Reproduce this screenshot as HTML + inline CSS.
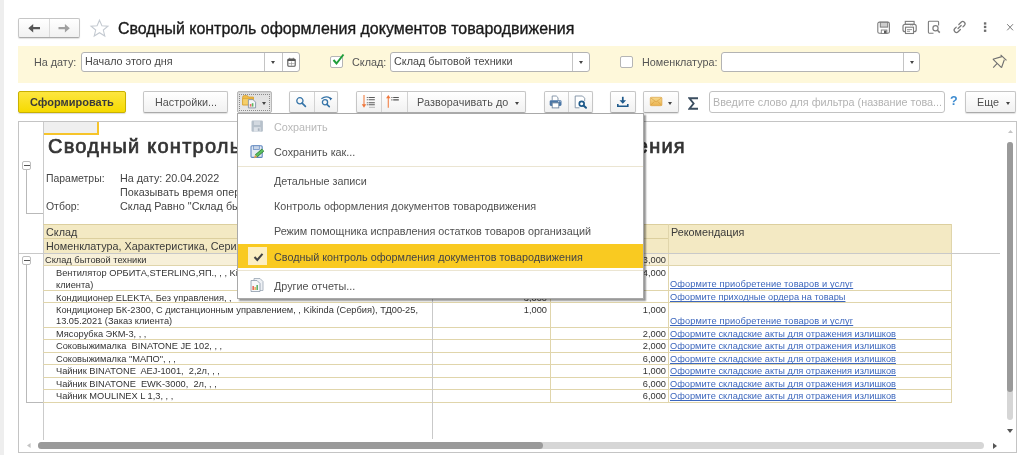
<!DOCTYPE html>
<html><head><meta charset="utf-8">
<style>
*{box-sizing:border-box;margin:0;padding:0}
html,body{width:1024px;height:455px;overflow:hidden;background:#fff;-webkit-font-smoothing:antialiased;font-family:"Liberation Sans",sans-serif;color:#333}
.a{position:absolute}
.t{position:absolute;white-space:pre;will-change:transform}
.btn{position:absolute;border:1px solid #c6c6c6;border-bottom-color:#aaa;border-radius:2px;background:linear-gradient(#fff,#f1f1f1);box-shadow:0 1px 1px rgba(0,0,0,.12)}
.dv{position:absolute;top:0;bottom:0;width:1px;background:#d2d2d2}
.fld{position:absolute;background:#fff;border:1px solid #b3b3b3;border-radius:3px}
.dd{position:absolute;width:0;height:0;border-left:2.5px solid transparent;border-right:2.5px solid transparent;border-top:3px solid #444}
.ui{font-size:10.8px;line-height:12px}
.tb{font-size:9.25px;line-height:11px;color:#333}
.lnk{color:#3d67bd;text-decoration:underline;text-decoration-skip-ink:none;text-decoration-thickness:1px}
.hl{position:absolute;height:1px;background:#e0d5ab}
.vl{position:absolute;width:1px;background:#e0d5ab}
</style></head><body>
<!-- left strip -->
<div class="a" style="left:0;top:0;width:4px;height:455px;background:#eeeeee"></div>

<!-- nav buttons -->
<div class="btn" style="left:18px;top:18px;width:62px;height:20px">
  <div class="dv" style="left:30px;background:#dadada"></div>
  <svg class="a" style="left:7px;top:4px" width="16" height="10" viewBox="0 0 16 10"><path d="M2.3 5.2 L7.2 1 L7.2 4.1 L14 4.1 L14 6.3 L7.2 6.3 L7.2 9.4 Z" fill="#555"/></svg>
  <svg class="a" style="left:37px;top:4px" width="16" height="10" viewBox="0 0 16 10"><path d="M13.8 5.2 L8.9 1 L8.9 4.1 L2.5 4.1 L2.5 6.3 L8.9 6.3 L8.9 9.4 Z" fill="#a0a0a0"/></svg>
</div>
<!-- star -->
<svg class="a" style="left:89px;top:18px" width="21" height="20" viewBox="0 0 21 20"><path d="M10.5 1.2 L13.1 7.2 L19.6 7.6 L14.6 11.8 L16.2 18.2 L10.5 14.7 L4.8 18.2 L6.4 11.8 L1.4 7.6 L7.9 7.2 Z" transform="translate(10.5 10) scale(.93) translate(-10.5 -9.6)" fill="none" stroke="#c4cad1" stroke-width="1.15"/></svg>
<div class="t" style="left:118px;top:20px;font-size:15.96px;line-height:18px;color:#1a1a1a;-webkit-text-stroke:.35px #1a1a1a">Сводный контроль оформления документов товародвижения</div>

<!-- top right icons -->
<svg class="a" style="left:872px;top:16px" width="72" height="24" viewBox="0 0 72 24">
 <g fill="none" stroke="#7d7d7d">
  <rect x="5.8" y="6.1" width="11.6" height="11.2" rx="1.6" stroke-width="1.1"/>
  <rect x="8.3" y="6.3" width="7.4" height="4.8" fill="#cdcdcd" stroke-width="1"/>
  <rect x="9.3" y="14" width="5.6" height="3.5" fill="#fff" stroke-width=".9"/>
  <rect x="12" y="14.6" width="2.4" height="2.6" fill="#5a5a5a" stroke="none"/>
  <rect x="33.3" y="5.4" width="8.8" height="3" stroke-width="1.1"/>
  <rect x="31" y="8.3" width="13.2" height="7.4" rx="2" stroke-width="1.2"/>
  <rect x="33.5" y="11.2" width="8" height="6.3" fill="#fff" stroke-width="1.1"/>
  <path d="M35 13.6h5M35 15.3h3" stroke-width=".8"/>
  <path d="M38.5 9.6h.8M40.3 9.6h.8" stroke-width=".7"/>
  <path d="M61.5 17.2H57.3a.9.9 0 0 1-.9-.9V6.2a.9.9 0 0 1 .9-.9h8.4a.9.9 0 0 1 .9.9V9.6" stroke-width="1.1"/>
  <circle cx="63.5" cy="12.3" r="2.6" stroke-width="1.2"/>
  <path d="M65.4 14.3l2.4 2.3" stroke-width="1.5"/>
 </g>
</svg>
<svg class="a" style="left:948px;top:16px" width="72" height="24" viewBox="0 0 72 24">
 <g transform="translate(11.6 11) rotate(-45)" fill="none" stroke="#7a7a7a" stroke-width="1.25" stroke-linecap="round">
  <path d="M1.2 -2.3H4.4A2.3 2.3 0 0 1 4.4 2.3H2.4"/>
  <path d="M-1.2 2.3H-4.4A2.3 2.3 0 0 1 -4.4 -2.3H-2.4"/>
  <path d="M-2.2 0H2.2"/>
 </g>
 <rect x="35.9" y="6.3" width="2.4" height="2.3" fill="#6e6e6e"/>
 <rect x="35.9" y="9.8" width="2.4" height="2.3" fill="#6e6e6e"/>
 <rect x="35.9" y="13.6" width="2.4" height="2.3" fill="#6e6e6e"/>
 <path d="M59.2 8.2L65 14.3M65 8.2L59.2 14.3" stroke="#7a7a7a" stroke-width="1"/>
</svg>

<!-- filter bar -->
<div class="a" style="left:18px;top:46px;width:998px;height:37px;background:#fef8da"></div>
<div class="t ui" style="left:34px;top:56px;color:#555">На дату:</div>
<div class="fld" style="left:81px;top:52px;width:219px;height:20px">
  <div class="t ui" style="left:3px;top:2.4px;color:#474747">Начало этого дня</div>
  <div class="dv" style="left:182px;background:#c4c4c4"></div>
  <div class="dd" style="left:189px;top:7.5px"></div>
  <div class="dv" style="left:200px;background:#c4c4c4"></div>
  <svg class="a" style="left:204.5px;top:3.5px" width="9" height="10" viewBox="0 0 9 10"><rect x=".8" y="2" width="7.4" height="7.3" rx="1" fill="#fff" stroke="#555" stroke-width="1.1"/><rect x=".8" y="2" width="7.4" height="2" fill="#555"/><path d="M2.7 .8v1.6M6.3 .8v1.6" stroke="#666" stroke-width=".9"/><path d="M4.5 4.5v4.3M1.3 6.6h6.4" stroke="#999" stroke-width=".7"/></svg>
</div>
<div class="a" style="left:330px;top:56px;width:13px;height:12px;border:1px solid #b5b5b5;border-radius:2px;background:#fff"></div>
<svg class="a" style="left:331px;top:53px" width="14" height="13" viewBox="0 0 14 13"><path d="M2.5 7 L5.5 10.5 L12.5 1.5" fill="none" stroke="#1f9e3a" stroke-width="2"/></svg>
<div class="t ui" style="left:352px;top:56px;color:#555">Склад:</div>
<div class="fld" style="left:390px;top:52px;width:200px;height:20px">
  <div class="t ui" style="left:3px;top:2.4px;color:#474747">Склад бытовой техники</div>
  <div class="dv" style="left:181px;background:#c4c4c4"></div>
  <div class="dd" style="left:188px;top:7.5px"></div>
</div>
<div class="a" style="left:620px;top:56px;width:13px;height:12px;border:1px solid #b5b5b5;border-radius:2px;background:#fff"></div>
<div class="t ui" style="left:642px;top:56px;color:#555">Номенклатура:</div>
<div class="fld" style="left:721px;top:52px;width:199px;height:20px">
  <div class="dv" style="left:181px;background:#c4c4c4"></div>
  <div class="dd" style="left:188px;top:7.5px"></div>
</div>
<svg class="a" style="left:984px;top:48px" width="32" height="28" viewBox="0 0 32 28"><path d="M8.9 11.1L17.5 19.7M8.9 11.3L17.8 8.6M17.5 19.7L20.3 11.7M16.6 6.8L22.5 12.3M13.2 15.4L9.2 19.7" fill="none" stroke="#6f6f6f" stroke-width="1.1"/></svg>

<!-- toolbar -->
<div class="a" style="left:18px;top:91px;width:108px;height:22px;border:1px solid #c9b100;border-radius:2px;background:linear-gradient(#fde640,#f6da00);box-shadow:0 1px 1px rgba(0,0,0,.15)"></div>
<div class="t" style="left:30px;top:95.5px;font-size:11px;line-height:12px;font-weight:bold;color:#3a3a3a">Сформировать</div>
<div class="btn" style="left:143px;top:91px;width:85px;height:22px"><div class="t ui" style="left:11px;top:4px;color:#505050">Настройки...</div></div>
<div class="a" style="left:237px;top:91px;width:35px;height:22px;border:1px solid #b8b8b8;border-radius:2px;background:linear-gradient(#e0e0e0,#e8e8e8);box-shadow:inset 0 1px 1px rgba(0,0,0,.08)">
  <div class="a" style="left:1px;top:1.5px;width:31px;height:17px;border:1px dotted #8a8a8a"></div>
  <svg class="a" style="left:4px;top:3px" width="17" height="15" viewBox="0 0 17 15"><path d="M.6 2.2Q.6 .5 2.5 .5H4.5Q6 .5 6.5 2H11.5V9.9H.6Z" fill="#eebb4c" stroke="#d59c26" stroke-width=".7"/><path d="M.6 3.6H11.5V9.9H.6Z" fill="#f5cf6a" stroke="#d59c26" stroke-width=".6"/><path d="M6.4 4.6h4.6l2.6 2.6v5.7H6.4z" fill="#f4f6f8" stroke="#8391a3" stroke-width=".9"/><rect x="7.8" y="9" width="1.6" height="2.6" fill="#ec6a6a"/><rect x="9.8" y="8.2" width="1.6" height="3.4" fill="#5cb85c"/></svg>
  <div class="dd" style="left:23.5px;top:9.6px"></div>
</div>
<div class="btn" style="left:289px;top:91px;width:49px;height:22px">
  <div class="dv" style="left:24px"></div>
  <svg class="a" style="left:6px;top:5px" width="11" height="11" viewBox="0 0 11 11"><circle cx="3.9" cy="3.8" r="3.1" fill="none" stroke="#3574a8" stroke-width="1.3"/><path d="M6.1 6.2L9.4 9.4" stroke="#3574a8" stroke-width="1.7" stroke-linecap="round"/></svg>
  <svg class="a" style="left:31px;top:4px" width="12" height="12" viewBox="0 0 12 12"><circle cx="4" cy="6.3" r="2.6" fill="none" stroke="#3574a8" stroke-width="1.3"/><path d="M5.9 8.3L8.3 10.6" stroke="#3574a8" stroke-width="1.6" stroke-linecap="round"/><path d="M0.4 2.8 Q5 -0.6 9.2 2.2" fill="none" stroke="#3574a8" stroke-width="1.3"/><path d="M8.3 1 L11.3 2.4 L9.2 4.6Z" fill="#2d68a0"/></svg>
</div>
<div class="btn" style="left:356px;top:91px;width:170px;height:22px">
  <div class="dv" style="left:24px"></div>
  <div class="dv" style="left:50px"></div>
  <svg class="a" style="left:4px;top:2px" width="16" height="16" viewBox="0 0 16 16"><path d="M3 1v10" stroke="#f28a55" stroke-width="1.2"/><path d="M0.8 10.3L5.2 10.3 3 13.7Z" fill="#f0763a"/><path d="M5.8 3.5h1M7.6 3.5h6.2M5.8 5.7h1M7.6 5.7h6.2M5.8 8.7h1M7.6 8.7h6.2M5.8 10.7h1M7.6 10.7h6.2" stroke="#5a5a5a" stroke-width="1.1"/><path d="M8 13.3h6" stroke="#aaa" stroke-width=".8"/></svg>
  <svg class="a" style="left:28px;top:2px" width="16" height="16" viewBox="0 0 16 16"><path d="M3.3 3v10.7" stroke="#f28a55" stroke-width="1.2"/><path d="M1.1 4.2L5.5 4.2 3.3 1Z" fill="#f0763a"/><path d="M6.4 3.5h1M8.2 3.5h5.6M6.4 5.8h1M8.2 5.8h5.6" stroke="#555" stroke-width="1.2"/></svg>
  <div class="t ui" style="left:60px;top:4px;color:#505050;letter-spacing:.09px">Разворачивать до</div>
  <div class="dd" style="left:158px;top:10px"></div>
</div>
<div class="btn" style="left:544px;top:91px;width:49px;height:22px">
  <div class="dv" style="left:23px"></div>
  <svg class="a" style="left:0;top:0" width="47" height="20" viewBox="0 0 47 20"><path d="M7.2 8.4V4H11.3L13 5.7V8.4" fill="#fff" stroke="#7e8fa3" stroke-width=".9"/><rect x="4.7" y="8.3" width="11.8" height="5.6" rx="1.3" fill="#4a76a6"/><path d="M13 9.6h1M14.6 9.6h1" stroke="#e8eef5" stroke-width=".8"/><rect x="7.2" y="10.9" width="6.6" height="5" fill="#fff" stroke="#6f86a0" stroke-width=".9"/>
  <path d="M34.5 15.8H30.2V4H37.5L39.7 6.2V9" fill="#fff" stroke="#7d8ea3" stroke-width=".9"/><circle cx="36.7" cy="11.7" r="2.4" fill="#fff" stroke="#1e5a8a" stroke-width="1.7"/><path d="M38.5 13.5L41 15.8" stroke="#1e5a8a" stroke-width="2" stroke-linecap="round"/></svg>
</div>
<div class="btn" style="left:610px;top:91px;width:26px;height:22px">
  <svg class="a" style="left:0;top:0" width="24" height="20" viewBox="0 0 24 20"><path d="M11.8 4.8v5.5" stroke="#1f5a8c" stroke-width="1.7"/><path d="M8.5 8.2L11.8 11.8 15.1 8.2Z" fill="#1f5a8c"/><path d="M6.8 12v2.2h10v-2.2" fill="none" stroke="#1f5a8c" stroke-width="1.6"/></svg>
</div>
<div class="btn" style="left:643px;top:91px;width:35.5px;height:22px">
  <svg class="a" style="left:0;top:0" width="33" height="20" viewBox="0 0 33 20"><defs><linearGradient id="eg" x1="0" y1="0" x2="0" y2="1"><stop offset="0" stop-color="#f7d98e"/><stop offset="1" stop-color="#e9b24e"/></linearGradient></defs><rect x="6.3" y="5.3" width="11.6" height="8.4" rx="1" fill="url(#eg)" stroke="#dca446" stroke-width=".7"/><path d="M6.6 5.8L12.1 9.9L17.6 5.8M6.6 13.3L10.5 9.4M17.6 13.3L13.7 9.4" fill="none" stroke="#d59a3a" stroke-width=".6"/></svg>
  <div class="dd" style="left:23.5px;top:10.3px"></div>
</div>
<svg class="a" style="left:688px;top:96.5px" width="11" height="13" viewBox="0 0 11 13"><path d="M10 1.3H1.4L5.6 6.5L1.4 11.7H10" fill="none" stroke="#3b4e60" stroke-width="1.9" stroke-linejoin="miter"/></svg>
<div class="fld" style="left:709px;top:91px;width:236px;height:22px;border-color:#c2c2c2">
  <div class="t ui" style="left:3px;top:4px;color:#b3b3b3">Введите слово для фильтра (название това...</div>
</div>
<div class="t" style="left:949.5px;top:94px;font-size:12.5px;line-height:14px;font-weight:bold;color:#3d8bd0">?</div>
<div class="btn" style="left:965px;top:91px;width:51px;height:22px">
  <div class="t ui" style="left:11px;top:4px;color:#505050">Еще</div>
  <div class="dd" style="left:40px;top:9.7px"></div>
</div>

<!-- report area -->
<div class="a" style="left:18px;top:121px;width:999px;height:332px;border:1px solid #c4c4c4;background:#fff;overflow:hidden">
</div>

<!-- report content -->
<div class="a" style="left:19px;top:122px;width:997px;height:329px;overflow:hidden">
<div class="a" style="left:0;top:0;width:1000px;height:400px;transform:translate(-19px,-122px)">
  <!-- gutter line -->
  <div class="a" style="left:43px;top:122px;width:1px;height:318px;background:#cbcbcb"></div>
  <!-- selected cell -->
  <div class="a" style="left:44px;top:122px;width:55px;height:13px;background:#efefef;border-right:2px solid #f6c42a;border-bottom:2px solid #f6c42a"></div>
  <div class="t" style="left:48px;top:134px;font-size:20px;line-height:24px;color:#333;letter-spacing:1.24px;-webkit-text-stroke:.7px #333">Сводный контроль оформления документов товародвижения</div>
  <!-- tree 1 -->
  <div class="a" style="left:21.5px;top:161px;width:9.5px;height:9px;border:1px solid #bdbdbd;border-radius:2px;background:#fff"></div>
  <div class="a" style="left:23.5px;top:165px;width:6px;height:1px;background:#555"></div>
  <div class="a" style="left:26px;top:170px;width:1px;height:43px;background:#b9b9b9"></div>
  <div class="a" style="left:26px;top:213px;width:17px;height:1px;background:#b9b9b9"></div>
  <div class="t ui" style="left:46px;top:172.5px;color:#444;font-size:10.45px">Параметры:</div>
  <div class="t ui" style="left:119.6px;top:172.4px;color:#444">На дату: 20.04.2022</div>
  <div class="t ui" style="left:119.6px;top:185.8px;color:#444">Показывать время операций: Нет</div>
  <div class="t ui" style="left:46px;top:200.5px;color:#444;font-size:10.45px">Отбор:</div>
  <div class="t ui" style="left:119.6px;top:200.4px;color:#444">Склад Равно "Склад бытовой техники"</div>
  <!-- header -->
  <div class="a" style="left:44px;top:224px;width:907px;height:29px;background:#f3e9c3"></div>
  <div class="hl" style="left:43px;top:224px;width:908px;background:#dccf9e"></div>
  <div class="hl" style="left:43px;top:238px;width:625px;background:#dccf9e"></div>
  <div class="t ui" style="left:46px;top:225.6px;color:#3a3a3a">Склад</div>
  <div class="t ui" style="left:46px;top:240px;color:#3a3a3a">Номенклатура, Характеристика, Серия</div>
  <div class="t ui" style="left:671px;top:225.5px;color:#3a3a3a">Рекомендация</div>
  <!-- group row -->
  <div class="a" style="left:44px;top:254px;width:907px;height:11px;background:#f7f0d9"></div>
  <div class="t tb" style="left:45px;top:254.6px">Склад бытовой техники</div>
  <div class="t tb" style="left:432px;top:254.6px;width:115px;text-align:right">3,000</div>
  <div class="t tb" style="left:550px;top:254.6px;width:116px;text-align:right">3,000</div>
  <!-- rows -->
  <div class="t tb" style="left:55.8px;top:267.6px">Вентилятор ОРБИТА,STERLING,ЯП., , , Kikinda (Сербия), ТД00-25, 13.05.2021 (Заказ</div>
  <div class="t tb" style="left:55.8px;top:279.6px">клиента)</div>
  <div class="t tb" style="left:432px;top:267.6px;width:115px;text-align:right">4,000</div>
  <div class="t tb" style="left:550px;top:267.6px;width:116px;text-align:right">4,000</div>
  <div class="t tb lnk" style="left:670px;top:279.4px;letter-spacing:.12px">Оформите приобретение товаров и услуг</div>
  <div class="t tb" style="left:55.8px;top:292.6px">Кондиционер ELEKTA, Без управления, ,</div>
  <div class="t tb" style="left:432px;top:292.6px;width:115px;text-align:right">3,000</div>
  <div class="t tb lnk" style="left:670px;top:291.9px">Оформите приходные ордера на товары</div>
  <div class="t tb" style="left:55.8px;top:305.1px">Кондиционер БК-2300, С дистанционным управлением, , Kikinda (Сербия), ТД00-25,</div>
  <div class="t tb" style="left:55.8px;top:316.1px">13.05.2021 (Заказ клиента)</div>
  <div class="t tb" style="left:432px;top:305.1px;width:115px;text-align:right">1,000</div>
  <div class="t tb" style="left:550px;top:305.1px;width:116px;text-align:right">1,000</div>
  <div class="t tb lnk" style="left:670px;top:315.9px;letter-spacing:.12px">Оформите приобретение товаров и услуг</div>
    <div class="t tb" style="left:55.8px;top:328.6px">Мясорубка ЭКМ-3, , ,</div>
  <div class="t tb" style="left:550px;top:328.6px;width:116px;text-align:right">2,000</div>
  <div class="t tb lnk" style="left:670px;top:328.9px">Оформите складские акты для отражения излишков</div>
  <div class="t tb" style="left:55.8px;top:341.1px">Соковыжималка  BINATONE JE 102, , ,</div>
  <div class="t tb" style="left:550px;top:341.1px;width:116px;text-align:right">2,000</div>
  <div class="t tb lnk" style="left:670px;top:341.4px">Оформите складские акты для отражения излишков</div>
  <div class="t tb" style="left:55.8px;top:353.6px">Соковыжималка "МАПО", , ,</div>
  <div class="t tb" style="left:550px;top:353.6px;width:116px;text-align:right">6,000</div>
  <div class="t tb lnk" style="left:670px;top:353.9px">Оформите складские акты для отражения излишков</div>
  <div class="t tb" style="left:55.8px;top:366.1px">Чайник BINATONE  AEJ-1001,  2,2л, , ,</div>
  <div class="t tb" style="left:550px;top:366.1px;width:116px;text-align:right">1,000</div>
  <div class="t tb lnk" style="left:670px;top:366.4px">Оформите складские акты для отражения излишков</div>
  <div class="t tb" style="left:55.8px;top:378.6px">Чайник BINATONE  EWK-3000,  2л, , ,</div>
  <div class="t tb" style="left:550px;top:378.6px;width:116px;text-align:right">6,000</div>
  <div class="t tb lnk" style="left:670px;top:378.9px">Оформите складские акты для отражения излишков</div>
  <div class="t tb" style="left:55.8px;top:391.1px">Чайник MOULINEX L 1,3, , ,</div>
  <div class="t tb" style="left:550px;top:391.1px;width:116px;text-align:right">6,000</div>
  <div class="t tb lnk" style="left:670px;top:391.4px">Оформите складские акты для отражения излишков</div>

  <!-- lines -->
    <div class="hl" style="left:43px;top:265px;width:908px"></div>
  <div class="hl" style="left:43px;top:290px;width:908px"></div>
  <div class="hl" style="left:43px;top:302px;width:908px"></div>
  <div class="hl" style="left:43px;top:327px;width:908px"></div>
  <div class="hl" style="left:43px;top:339px;width:908px"></div>
  <div class="hl" style="left:43px;top:352px;width:908px"></div>
  <div class="hl" style="left:43px;top:364px;width:908px"></div>
  <div class="hl" style="left:43px;top:377px;width:908px"></div>
  <div class="hl" style="left:43px;top:389px;width:908px"></div>
  <div class="hl" style="left:43px;top:402px;width:908px"></div>
  <div class="vl" style="left:432px;top:224px;height:179px"></div>
  <div class="vl" style="left:550px;top:224px;height:179px"></div>
  <div class="vl" style="left:668px;top:224px;height:179px"></div>
  <div class="vl" style="left:951px;top:224px;height:179px"></div>

  <div class="a" style="left:18px;top:253px;width:982px;height:1px;background:#c9c9c9"></div>
  <div class="a" style="left:432px;top:253px;width:1px;height:186px;background:#c9c9c9"></div>
  <!-- tree 2 -->
  <div class="a" style="left:21.5px;top:256px;width:9.5px;height:9px;border:1px solid #bdbdbd;border-radius:2px;background:#fff"></div>
  <div class="a" style="left:23.5px;top:260px;width:6px;height:1px;background:#555"></div>
  <div class="a" style="left:26px;top:265px;width:1px;height:137px;background:#b9b9b9"></div>
  <div class="a" style="left:26px;top:402px;width:17px;height:1px;background:#b9b9b9"></div>
</div>
</div>
<!-- scrollbars -->
<svg class="a" style="left:1007.5px;top:129.8px" width="5" height="3" viewBox="0 0 5 3"><path d="M0 3L2.5 0L5 3Z" fill="#c4c4c4"/></svg>
<div class="a" style="left:1006.5px;top:141.5px;width:6.5px;height:278px;border-radius:3.25px;background:#d6d6d6"></div>
<div class="a" style="left:1006.5px;top:141.5px;width:6.5px;height:250px;border-radius:3.25px;background:#9a9a9a"></div>
<svg class="a" style="left:1007px;top:429px" width="6" height="4" viewBox="0 0 6 4"><path d="M0 0L3 4L6 0Z" fill="#555"/></svg>
<svg class="a" style="left:26.5px;top:443.2px" width="4" height="5" viewBox="0 0 4 5"><path d="M3.6 0L0 2.5L3.6 5Z" fill="#c4c4c4"/></svg>
<div class="a" style="left:38px;top:442px;width:946px;height:7px;border-radius:3.5px;background:#d6d6d6"></div>
<div class="a" style="left:38px;top:442px;width:505px;height:7px;border-radius:3.5px;background:#9a9a9a"></div>
<svg class="a" style="left:993px;top:443px" width="4" height="6" viewBox="0 0 4 6"><path d="M0 0L4 3L0 6Z" fill="#555"/></svg>

<!-- popup menu -->
<div class="a" style="left:237px;top:113px;width:407px;height:186px;background:#fff;border:1px solid #a9a9a9;box-shadow:2px 2px 1.5px rgba(0,0,0,.4)">
  <div class="a" style="left:0;top:0;width:0;height:0"></div>
</div>
<div class="a" style="left:0;top:0;width:0;height:0">
  <svg class="a" style="left:251px;top:120px" width="13" height="13" viewBox="0 0 13 13"><rect x=".5" y=".6" width="11.4" height="11.2" rx="1.2" fill="#b7c1cb"/><rect x="3" y="1.2" width="6.2" height="3.8" fill="#d3d9e0"/><rect x="2.8" y="7.2" width="6.8" height="4.6" fill="#dde2e8"/><rect x="6.8" y="8.3" width="1.8" height="2.6" fill="#a9b3be"/></svg>
  <div class="t ui" style="left:274px;top:120.6px;color:#b8b8b8">Сохранить</div>
  <svg class="a" style="left:250px;top:145px" width="15" height="14" viewBox="0 0 15 14"><rect x="1" y=".8" width="11.2" height="11.6" rx="1" fill="#e4ebf4" stroke="#5f86bf" stroke-width="1.1"/><rect x="3.3" y=".8" width="6" height="3.6" fill="#c9d6e8" stroke="#5f86bf" stroke-width=".7"/><path d="M6.2 10.9L13 5" stroke="#2f7d32" stroke-width="3.6"/><path d="M6.2 10.9L13 5" stroke="#5cc060" stroke-width="2.2"/><path d="M4 13.2L5 9.9L7.4 12Z" fill="#e0a048"/></svg>
  <div class="t ui" style="left:274px;top:146.4px;color:#505050">Сохранить как...</div>
  <div class="a" style="left:238px;top:166px;width:405px;height:1px;background:#ebe5d2"></div>
  <div class="t ui" style="left:274px;top:174.5px;color:#505050">Детальные записи</div>
  <div class="t ui" style="left:274px;top:200px;color:#505050">Контроль оформления документов товародвижения</div>
  <div class="t ui" style="left:274px;top:224.7px;color:#505050">Режим помощника исправления остатков товаров организаций</div>
  <div class="a" style="left:238px;top:244.3px;width:404.5px;height:24.2px;background:#f9ca21"></div>
  <div class="a" style="left:248px;top:247px;width:18.5px;height:18px;background:#fcefc3"></div>
  <svg class="a" style="left:252.5px;top:251.8px" width="11" height="10" viewBox="0 0 11 10"><path d="M1.5 5 L4.3 8 L9.5 1.8" fill="none" stroke="#444" stroke-width="2"/></svg>
  <div class="t ui" style="left:274px;top:250.6px;color:#444">Сводный контроль оформления документов товародвижения</div>
  <div class="a" style="left:238px;top:269.5px;width:405px;height:1px;background:#ebe5d2"></div>
  <svg class="a" style="left:250px;top:278px" width="14" height="14" viewBox="0 0 14 14"><path d="M4 .5h6l3 3v9H4z" fill="#eef1f5" stroke="#9aa6b4" stroke-width=".8"/><path d="M1 2.5h6l3 3v8H1z" fill="#f6f8fa" stroke="#8c99a8" stroke-width=".8"/><rect x="2.5" y="8" width="1.3" height="4" fill="#e04a3a"/><rect x="4.5" y="9" width="1.3" height="3" fill="#e8a33a"/><rect x="6.5" y="7" width="1.3" height="5" fill="#3aa04a"/></svg>
  <div class="t ui" style="left:274px;top:279.7px;color:#505050">Другие отчеты...</div>
</div>
</body></html>
